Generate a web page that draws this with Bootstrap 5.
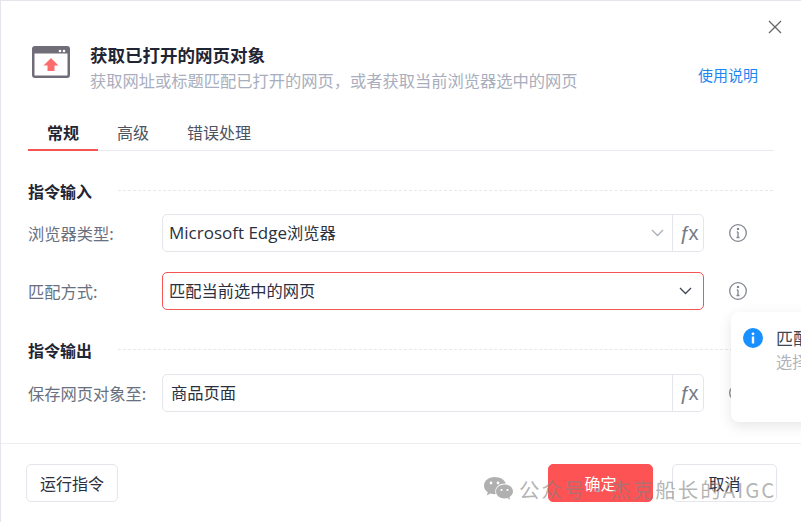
<!DOCTYPE html>
<html lang="zh-CN">
<head>
    <meta charset="UTF-8">
    <meta name="viewport" content="width=device-width, initial-scale=1.0">
    <title>获取已打开的网页对象</title>
    <link href="https://cdn.jsdelivr.net/npm/bootstrap@5.3.0/dist/css/bootstrap.min.css" rel="stylesheet">
    <style>
        html, body {
            height: 522px;
            overflow: hidden;
        }
        body {
            position: relative;
            width: 801px;
            background-color: #fff;
            color: #1f2533;
            font-family: "Noto Sans CJK SC", "Noto Sans", sans-serif;
            font-size: 16px;
            line-height: 24px;
            border-top: 1px solid #e4e6ec;
            border-left: 1px solid #e4e6ec;
        }
        .head-area {
            height: 98px;
            padding: 0 27px 0 31px;
        }
        .close-x {
            display: block;
            margin: 19px 0 0 736px;
        }
        .head-icon {
            width: 38px;
            height: 32px;
            margin-top: 5px;
            flex: none;
        }
        .head-row {
            margin-top: 7px;
        }
        .head-text {
            margin-left: 20px;
        }
        .head-title {
            font-size: 17.5px;
            font-weight: 700;
            line-height: 27px;
        }
        .head-sub {
            color: #a8aebd;
            font-size: 16.25px;
            line-height: 24px;
        }
        .help-link {
            color: #1d86f0;
            font-size: 15px;
            text-decoration: none;
            margin-top: 22px;
            margin-right: 16px;
        }
        .tab-bar {
            margin: 0 27px;
            height: 33px;
            border-bottom: 1px solid #e9ebf0;
        }
        .tab-item {
            color: #4b5361;
            padding: 0 19px;
            height: 33px;
            line-height: 28px;
        }
        .tab-item.is-on {
            color: #1f2533;
            font-weight: 700;
            border-bottom: 2px solid #f45454;
        }
        .form-area {
            padding: 28px 28px 0 27px;
        }
        .sec-head {
            font-weight: 700;
            height: 24px;
        }
        .sec-head::after {
            content: "";
            flex: 1;
            margin-left: 26px;
            margin-top: -1px;
            border-top: 1px dashed #e6e8ee;
        }
        .field-row {
            height: 38px;
            margin-top: 20px;
        }
        .sec-head + .field-row {
            margin-top: 11px;
        }
        .out-sec {
            margin-top: 28px;
        }
        .out-sec + .field-row {
            margin-top: 12px;
        }
        .field-label {
            width: 134px;
            color: #687080;
            flex: none;
            font-size: 16.25px;
        }
        .field-box {
            width: 542px;
            height: 38px;
            flex: none;
            border: 1px solid #e4e6ec;
            border-radius: 5px;
            font-family: "Open Sans", "Noto Sans CJK SC", sans-serif;
            font-size: 16.25px;
        }
        .field-box.is-active {
            border-color: #f45454;
        }
        .field-text {
            padding-left: 6px;
            color: #2a3040;
        }
        .latin-part {
            font-size: 17px;
        }
        .out-text {
            padding-left: 8px;
            color: #2a3040;
        }
        .fx-cell {
            width: 31px;
            height: 36px;
            border-left: 1px solid #e4e6ec;
            color: #757a85;
            font-family: "Liberation Sans", sans-serif;
            font-size: 20px;
            letter-spacing: -2px;
        }
        .tip-icon {
            margin-left: 24px;
        }
        .foot-bar {
            position: absolute;
            top: 442px;
            left: 0;
            right: 0;
            height: 79px;
            border-top: 1px solid #eceef2;
            padding: 20px 24px 0 25px;
        }
        .foot-btn {
            height: 38px;
            font-size: 16px;
            line-height: 24px;
            border: 1px solid #e4e6ec;
            border-radius: 5px;
            color: #2a3040;
            background: #fff;
            padding: 0;
        }
        .run-btn {
            width: 92px;
        }
        .ok-btn {
            width: 105px;
            background: #fd5354;
            border-color: #fd5354;
            color: #fff;
        }
        .cancel-btn {
            width: 105px;
            margin-left: 19px;
        }
        .notice {
            position: absolute;
            left: 730px;
            top: 311px;
            width: 90px;
            height: 110px;
            background: #fff;
            border-radius: 8px;
            box-shadow: 0 4px 14px rgba(0, 0, 0, .1);
            padding: 14px 0 0 12px;
            overflow: hidden;
        }
        .notice-title {
            color: #3d4654;
            font-size: 17px;
            white-space: nowrap;
            margin-left: 13px;
        }
        .notice-sub {
            color: #b0b3ba;
            font-size: 16px;
            line-height: 22px;
            margin: 0 0 0 33px;
            white-space: nowrap;
        }
        .mark-line {
            position: absolute;
            left: 482px;
            top: 472px;
            color: rgba(130, 130, 130, .6);
            font-size: 20.5px;
            line-height: 32px;
            letter-spacing: 2px;
            word-spacing: -6px;
            white-space: nowrap;
            pointer-events: none;
        }
        .mark-logo {
            margin-right: 5px;
        }
    </style>
</head>
<body>

<!-- Header -->
<div class="head-area">
    <svg class="close-x" width="14" height="14" viewBox="0 0 14 14" fill="none" stroke="#666" stroke-width="1.3"><path d="M1 1l12 12M13 1L1 13"/></svg>
    <div class="d-flex head-row">
        <svg class="head-icon" viewBox="0 0 38 32">
            <rect width="38" height="32" rx="3" fill="#706c78"/>
            <rect x="2.500" y="7.500" width="33" height="22" fill="#fff"/>
            <circle cx="28" cy="5" r="1.300" fill="#fff"/>
            <circle cx="32" cy="5" r="1.300" fill="#fff"/>
            <path d="M19 12l7.500 7.500h-4V25h-7v-5.500h-4z" fill="#fc6d6d"/>
        </svg>
        <div class="head-text flex-grow-1">
            <div class="head-title">获取已打开的网页对象</div>
            <div class="head-sub">获取网址或标题匹配已打开的网页，或者获取当前浏览器选中的网页</div>
        </div>
        <a class="help-link" href="#">使用说明</a>
    </div>
</div>

<!-- Tabs -->
<div class="tab-bar d-flex">
    <div class="tab-item is-on">常规</div>
    <div class="tab-item">高级</div>
    <div class="tab-item">错误处理</div>
</div>

<!-- Form -->
<div class="form-area">
    <div class="sec-head d-flex align-items-center">指令输入</div>
    <div class="field-row d-flex align-items-center">
        <div class="field-label">浏览器类型:</div>
        <div class="field-box d-flex align-items-center">
            <div class="field-text flex-grow-1"><span class="latin-part">Microsoft Edge</span>浏览器</div>
            <svg class="me-2" width="13" height="8" viewBox="0 0 13 8" fill="none" stroke="#a9afbd" stroke-width="1.300"><path d="M1 1l5.500 5.500L12 1"/></svg>
            <div class="fx-cell d-flex align-items-center justify-content-center">ƒx</div>
        </div>
        <svg class="tip-icon" width="20" height="20" viewBox="0 0 20 20" fill="none" stroke="#82868f" stroke-width="1.300"><circle cx="10" cy="10" r="8.300"/><path d="M10 9v5.500M8.500 14.500h3M8.800 9h1.200" /><circle cx="10" cy="6" r=".6"/></svg>
    </div>
    <div class="field-row d-flex align-items-center">
        <div class="field-label">匹配方式:</div>
        <div class="field-box is-active d-flex align-items-center">
            <div class="field-text flex-grow-1">匹配当前选中的网页</div>
            <svg style="margin-right: 11px" width="13" height="8" viewBox="0 0 13 8" fill="none" stroke="#3f4654" stroke-width="1.300"><path d="M1 1l5.500 5.500L12 1"/></svg>
        </div>
        <svg class="tip-icon" width="20" height="20" viewBox="0 0 20 20" fill="none" stroke="#82868f" stroke-width="1.300"><circle cx="10" cy="10" r="8.300"/><path d="M10 9v5.500M8.500 14.500h3M8.800 9h1.200" /><circle cx="10" cy="6" r=".6"/></svg>
    </div>
    <div class="sec-head out-sec d-flex align-items-center">指令输出</div>
    <div class="field-row d-flex align-items-center">
        <div class="field-label">保存网页对象至:</div>
        <div class="field-box d-flex align-items-center">
            <div class="out-text flex-grow-1">商品页面</div>
            <div class="fx-cell d-flex align-items-center justify-content-center">ƒx</div>
        </div>
        <svg class="tip-icon" width="20" height="20" viewBox="0 0 20 20" fill="none" stroke="#82868f" stroke-width="1.300"><circle cx="10" cy="10" r="8.300"/><path d="M10 9v5.500M8.500 14.500h3M8.800 9h1.200" /><circle cx="10" cy="6" r=".6"/></svg>
    </div>
</div>

<!-- Footer -->
<div class="foot-bar d-flex">
    <button class="foot-btn run-btn btn">运行指令</button>
    <button class="foot-btn ok-btn btn ms-auto">确定</button>
    <button class="foot-btn cancel-btn btn">取消</button>
</div>

<!-- Notification, cut off by the window edge -->
<div class="notice">
    <div class="d-flex align-items-center">
        <svg class="flex-shrink-0" width="20" height="20" viewBox="0 0 20 20"><circle cx="10" cy="10" r="10" fill="#1890ff"/><rect x="8.800" y="8.500" width="2.400" height="7" fill="#fff"/><circle cx="10" cy="5.800" r="1.400" fill="#fff"/></svg>
        <div class="notice-title">匹配方式</div>
    </div>
    <div class="notice-sub">选择匹配方式</div>
</div>

<!-- Watermark -->
<div class="mark-line d-flex align-items-center">
    <svg class="mark-logo" width="31" height="26" viewBox="0 0 31 26">
        <path d="M11.500 1C5.700 1 1 4.900 1 9.700c0 2.700 1.500 5 3.800 6.600L3.800 19.500l3.600-1.900c1.300.4 2.700.6 4.100.6.400 0 .8 0 1.200-.1-.3-.8-.4-1.700-.4-2.600 0-4.500 4.300-8 9.600-8h.9C21.700 3.800 17.100 1 11.500 1z" fill="#b0b0b0"/>
        <path d="M30 15.500c0-3.900-3.800-7-8.500-7s-8.500 3.100-8.500 7 3.800 7 8.500 7c1 0 1.900-.1 2.800-.4l2.900 1.600-.8-2.600c2.200-1.400 3.600-3.400 3.600-5.600z" fill="#b0b0b0"/>
        <circle cx="8" cy="7" r="1.400" fill="#fff"/><circle cx="15" cy="7" r="1.400" fill="#fff"/>
        <circle cx="18.500" cy="14" r="1.100" fill="#fff"/><circle cx="24.500" cy="14" r="1.100" fill="#fff"/>
    </svg>
    <span>公众号 · 杰克船长的AIGC</span>
</div>

<script src="https://cdn.jsdelivr.net/npm/bootstrap@5.3.0/dist/js/bootstrap.bundle.min.js"></script>
</body>
</html>
